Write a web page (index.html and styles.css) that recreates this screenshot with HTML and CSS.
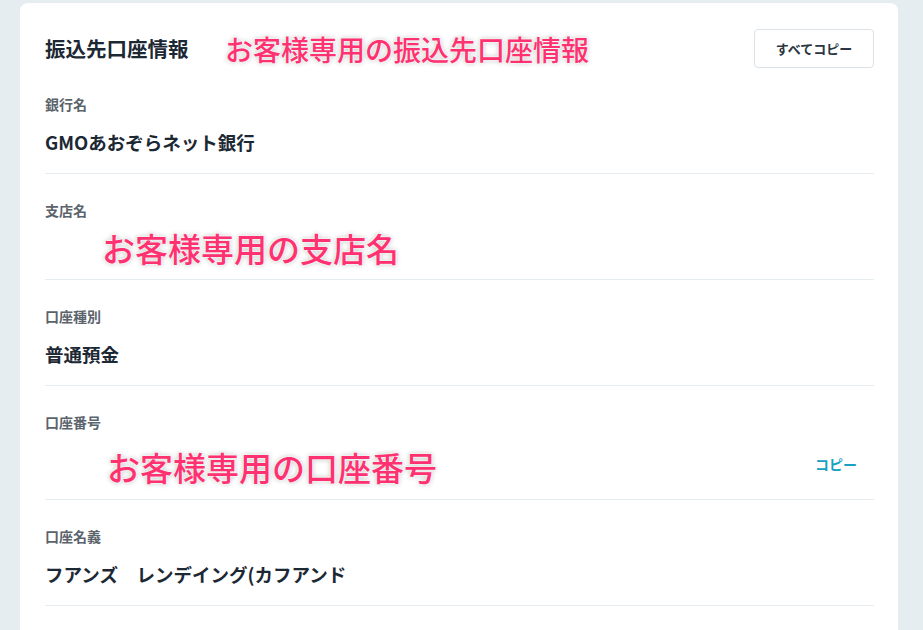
FILE: index.html
```html
<!DOCTYPE html>
<html lang="ja">
<head>
    <meta charset="UTF-8">
    <meta name="viewport" content="width=device-width, initial-scale=1.0">
    <title>振込先口座情報</title>
    <link rel="stylesheet" href="styles.css">
</head>
<body>
    <div class="card">
        <div class="card-header">
            <h2 class="card-title">振込先口座情報</h2>
            <span class="note note-title">お客様専用の振込先口座情報</span>
            <button class="copy-all">すべてコピー</button>
        </div>

        <div class="field">
            <div class="field-label">銀行名</div>
            <div class="field-value">GMOあおぞらネット銀行</div>
        </div>

        <div class="field">
            <div class="field-label">支店名</div>
            <div class="field-value"></div>
            <span class="note note-branch">お客様専用の支店名</span>
        </div>

        <div class="field">
            <div class="field-label">口座種別</div>
            <div class="field-value">普通預金</div>
        </div>

        <div class="field">
            <div class="field-label">口座番号</div>
            <div class="field-value with-copy">
                <span></span>
                <button class="copy-one">コピー</button>
            </div>
            <span class="note note-number">お客様専用の口座番号</span>
        </div>

        <div class="field">
            <div class="field-label">口座名義</div>
            <div class="field-value">フアンズ　レンデイング(カフアンド</div>
        </div>
    </div>
</body>
</html>
```

FILE: styles.css
```css
body {
    margin: 0;
    background-color: #e6edf1;
    font-family: "Noto Sans CJK JP", "Noto Sans", sans-serif;
    color: #1c2833;
}

.card {
    margin: 3px 0 0 20px;
    width: 878px;
    box-sizing: border-box;
    padding: 25px 24px 40px 25px;
    background-color: #fff;
    border-radius: 8px;
    min-height: 700px;
}

.card-header {
    position: relative;
    display: flex;
    align-items: center;
    justify-content: space-between;
    height: 40px;
}

.card-title {
    margin: 0;
    font-size: 20.5px;
    font-weight: 700;
    line-height: 26px;
    color: #1c2833;
}

.copy-all {
    height: 39px;
    width: 120px;
    padding: 0;
    font-family: inherit;
    font-size: 13px;
    font-weight: 700;
    color: #2b3640;
    background-color: #fff;
    border: 1px solid #dbe2e8;
    border-radius: 4px;
    cursor: pointer;
}

.field {
    position: relative;
    padding: 26px 0 18px;
    border-bottom: 1px solid #e6edf1;
}

.field-label {
    font-size: 14px;
    font-weight: 700;
    line-height: 20px;
    color: #5b636b;
}

.field-value {
    margin-top: 15px;
    min-height: 26px;
    font-size: 18.5px;
    font-weight: 700;
    line-height: 26px;
    color: #1c2833;
}

.field-value.with-copy {
    display: flex;
    align-items: center;
    justify-content: space-between;
    min-height: 33px;
}

.copy-one {
    padding: 7px 17px;
    font-family: inherit;
    font-size: 14px;
    font-weight: 700;
    color: #18a0c2;
    background: none;
    border: none;
    cursor: pointer;
}

/* annotations drawn over the screenshot */
.note {
    position: absolute;
    color: #ff3170;
    font-weight: 500;
    white-space: nowrap;
    text-shadow: 0 0 2px #fff, 0 0 3px #fff, 0 0 5px rgba(0, 0, 0, 0.35);
}

.note-title {
    left: 180px;
    top: 4px;
    font-size: 28px;
    line-height: 34px;
}

.note-branch {
    left: 57px;
    top: 54px;
    font-size: 33px;
    line-height: 40px;
}

.note-number {
    left: 62px;
    top: 61px;
    font-size: 33px;
    line-height: 40px;
}
```
